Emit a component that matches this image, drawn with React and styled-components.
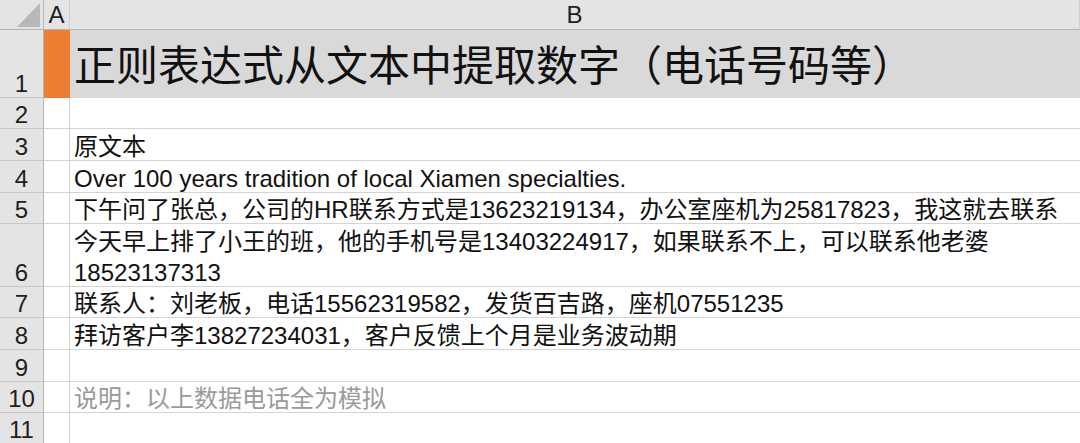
import React from 'react';
import styled, { createGlobalStyle } from 'styled-components';

const GlobalStyle = createGlobalStyle`
  html, body {
    margin: 0;
    padding: 0;
    background: #ffffff;
    overflow: hidden;
  }
  body {
    font-family: "Liberation Sans", "Noto Sans CJK SC", sans-serif;
  }
`;

const Sheet = styled.div`
  display: grid;
  grid-template-columns: 44px 26px 1fr;
  width: 1080px;
  height: 443px;
  overflow: hidden;
  background: #ffffff;
`;

const Corner = styled.div`
  height: 30px;
  box-sizing: border-box;
  background: #e4e4e4;
  border-right: 1px solid #b8b8b8;
  border-bottom: 1px solid #b4b4b4;
  display: flex;
  align-items: flex-start;
  justify-content: flex-start;
`;

const ColHead = styled.div`
  height: 30px;
  box-sizing: border-box;
  background: #e4e4e4;
  border-right: 1px solid #cfcfcf;
  border-bottom: 1px solid #b4b4b4;
  display: flex;
  align-items: center;
  justify-content: center;
  font-size: 24px;
  line-height: 30px;
  color: #1e1e1e;
`;

const RowHead = styled.div`
  height: ${(p) => p.$h}px;
  box-sizing: border-box;
  background: #e4e4e4;
  border-right: 1px solid #b4b4b4;
  border-bottom: 1px solid #c8c8c8;
  display: flex;
  align-items: flex-end;
  justify-content: center;
  font-size: 24px;
  line-height: 26px;
  color: #1e1e1e;
`;

const ACell = styled.div`
  height: ${(p) => p.$h}px;
  box-sizing: border-box;
  background: ${(p) => (p.$accent ? '#ed7d31' : '#ffffff')};
  border-right: 1px solid ${(p) => (p.$accent ? '#ed7d31' : '#d4d4d4')};
  border-bottom: 1px solid ${(p) => (p.$accent ? '#ed7d31' : '#d4d4d4')};
`;

const BCell = styled.div`
  height: ${(p) => p.$h}px;
  box-sizing: border-box;
  background: ${(p) => (p.$title ? '#d9d9d9' : '#ffffff')};
  border-bottom: 1px solid ${(p) => (p.$title ? '#d9d9d9' : '#d4d4d4')};
  display: flex;
  flex-direction: column;
  justify-content: flex-end;
  padding: 0 4px ${(p) => (p.$title ? '4px' : '0')} 4px;
  font-size: ${(p) => (p.$title ? '42px' : '24px')};
  line-height: ${(p) => (p.$title ? '52px' : '31px')};
  color: ${(p) => (p.$muted ? '#9a9a9a' : '#111111')};
  white-space: nowrap;
  overflow: hidden;
`;

const Lines = styled.div`
  margin-bottom: ${(p) => (p.$title ? '0' : '-2px')};
`;

const rows = [
  { n: 1, h: 68, title: true, lines: ['正则表达式从文本中提取数字（电话号码等）'] },
  { n: 2, h: 31, lines: [] },
  { n: 3, h: 32, lines: ['原文本'] },
  { n: 4, h: 32, lines: ['Over 100 years tradition of local Xiamen specialties.'] },
  { n: 5, h: 31, lines: ['下午问了张总，公司的HR联系方式是13623219134，办公室座机为25817823，我这就去联系'] },
  { n: 6, h: 63, lines: ['今天早上排了小王的班，他的手机号是13403224917，如果联系不上，可以联系他老婆', '18523137313'] },
  { n: 7, h: 31, lines: ['联系人：刘老板，电话15562319582，发货百吉路，座机07551235'] },
  { n: 8, h: 32, lines: ['拜访客户李13827234031，客户反馈上个月是业务波动期'] },
  { n: 9, h: 32, lines: [] },
  { n: 10, h: 31, muted: true, lines: ['说明：以上数据电话全为模拟'] },
  { n: 11, h: 31, lines: [] },
];

export default function App() {
  return (
    <>
      <GlobalStyle />
      <Sheet>
        <Corner>
          <svg width="43" height="29" viewBox="0 0 43 29">
            <polygon points="40,3 40,27 17,27" fill="#b8b8b8" />
          </svg>
        </Corner>
        <ColHead>A</ColHead>
        <ColHead>B</ColHead>
        {rows.map((r) => (
          <React.Fragment key={r.n}>
            <RowHead $h={r.h}>{r.n}</RowHead>
            <ACell $h={r.h} $accent={r.title} />
            <BCell $h={r.h} $title={r.title} $muted={r.muted}>
              {r.lines.length > 0 && (
                <Lines $title={r.title}>
                  {r.lines.map((l, i) => (
                    <div key={i}>{l}</div>
                  ))}
                </Lines>
              )}
            </BCell>
          </React.Fragment>
        ))}
      </Sheet>
    </>
  );
}
